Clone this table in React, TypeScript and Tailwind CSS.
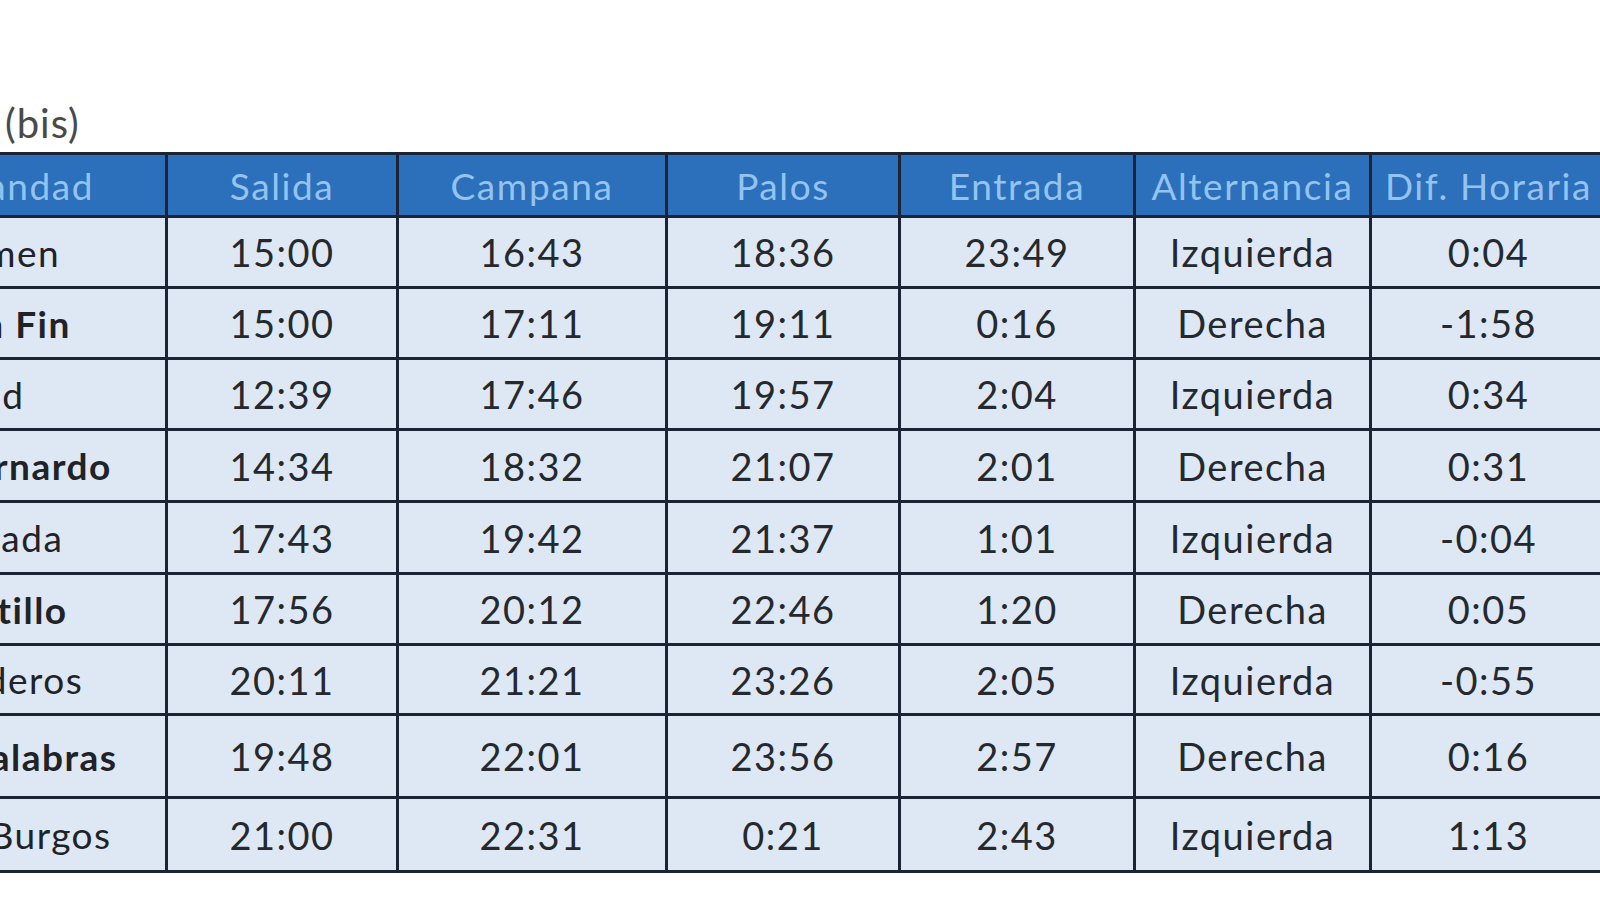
const headers = ["Hermandad", "Salida", "Campana", "Palos", "Entrada", "Alternancia", "Dif. Horaria"];

const rows = [
  { name: "Carmen", bold: false, h: "h-[71px]", cells: ["15:00", "16:43", "18:36", "23:49", "Izquierda", "0:04"] },
  { name: "Buen Fin", bold: true, h: "h-[71px]", cells: ["15:00", "17:11", "19:11", "0:16", "Derecha", "-1:58"] },
  { name: "Sed", bold: false, h: "h-[71px]", cells: ["12:39", "17:46", "19:57", "2:04", "Izquierda", "0:34"] },
  { name: "San Bernardo", bold: true, h: "h-[72px]", cells: ["14:34", "18:32", "21:07", "2:01", "Derecha", "0:31"] },
  { name: "Lanzada", bold: false, h: "h-[72px]", cells: ["17:43", "19:42", "21:37", "1:01", "Izquierda", "-0:04"] },
  { name: "Baratillo", bold: true, h: "h-[71px]", cells: ["17:56", "20:12", "22:46", "1:20", "Derecha", "0:05"] },
  { name: "Panaderos", bold: false, h: "h-[70px]", cells: ["20:11", "21:21", "23:26", "2:05", "Izquierda", "-0:55"] },
  { name: "Siete Palabras", bold: true, h: "h-[83px]", cells: ["19:48", "22:01", "23:56", "2:57", "Derecha", "0:16"] },
  { name: "Cristo Burgos", bold: false, h: "h-[74px]", cells: ["21:00", "22:31", "0:21", "2:43", "Izquierda", "1:13"] },
];

const colWidths = ["w-[325px]", "w-[231px]", "w-[269px]", "w-[233px]", "w-[235px]", "w-[236px]", "w-[236px]"];

export default function App() {
  return (
    <div className="w-[1600px] h-[900px] overflow-hidden bg-white font-['Lato',sans-serif]">
      <div className="pt-[98px] pl-[5px] h-[152px] text-[40px] leading-[50px] tracking-[1px] text-[#4a4a4a]">(bis)</div>

      <table className="table-fixed border-collapse ml-[-160px] w-[1765px] text-center">
        <colgroup>
          {colWidths.map((w, i) => (
            <col key={i} className={w} />
          ))}
        </colgroup>
        <thead>
          <tr className="h-[63px] bg-[#2c6fbb]">
            {headers.map((h, i) => (
              <th
                key={h}
                className={`border-[3px] border-[#1a2434] font-normal text-[37px] tracking-[1.6px] text-[#93c3ee] leading-none ${i === 0 ? "pr-[24px]" : ""}`}
              >
                {h}
              </th>
            ))}
          </tr>
        </thead>
        <tbody>
          {rows.map((r) => (
            <tr key={r.name} className={`${r.h} bg-[#dee8f4]`}>
              <td className={`border-[3px] border-[#1a2434] pr-[24px] text-[37px] text-[#1f2328] leading-none tracking-[1.5px] ${r.bold ? "font-bold" : "font-normal"}`}>
                {r.name}
              </td>
              {r.cells.map((c, i) => (
                <td key={i} className="border-[3px] border-[#1a2434] text-[38px] tracking-[1.5px] text-[#25292e] leading-none">
                  {c}
                </td>
              ))}
            </tr>
          ))}
        </tbody>
      </table>
    </div>
  );
}
